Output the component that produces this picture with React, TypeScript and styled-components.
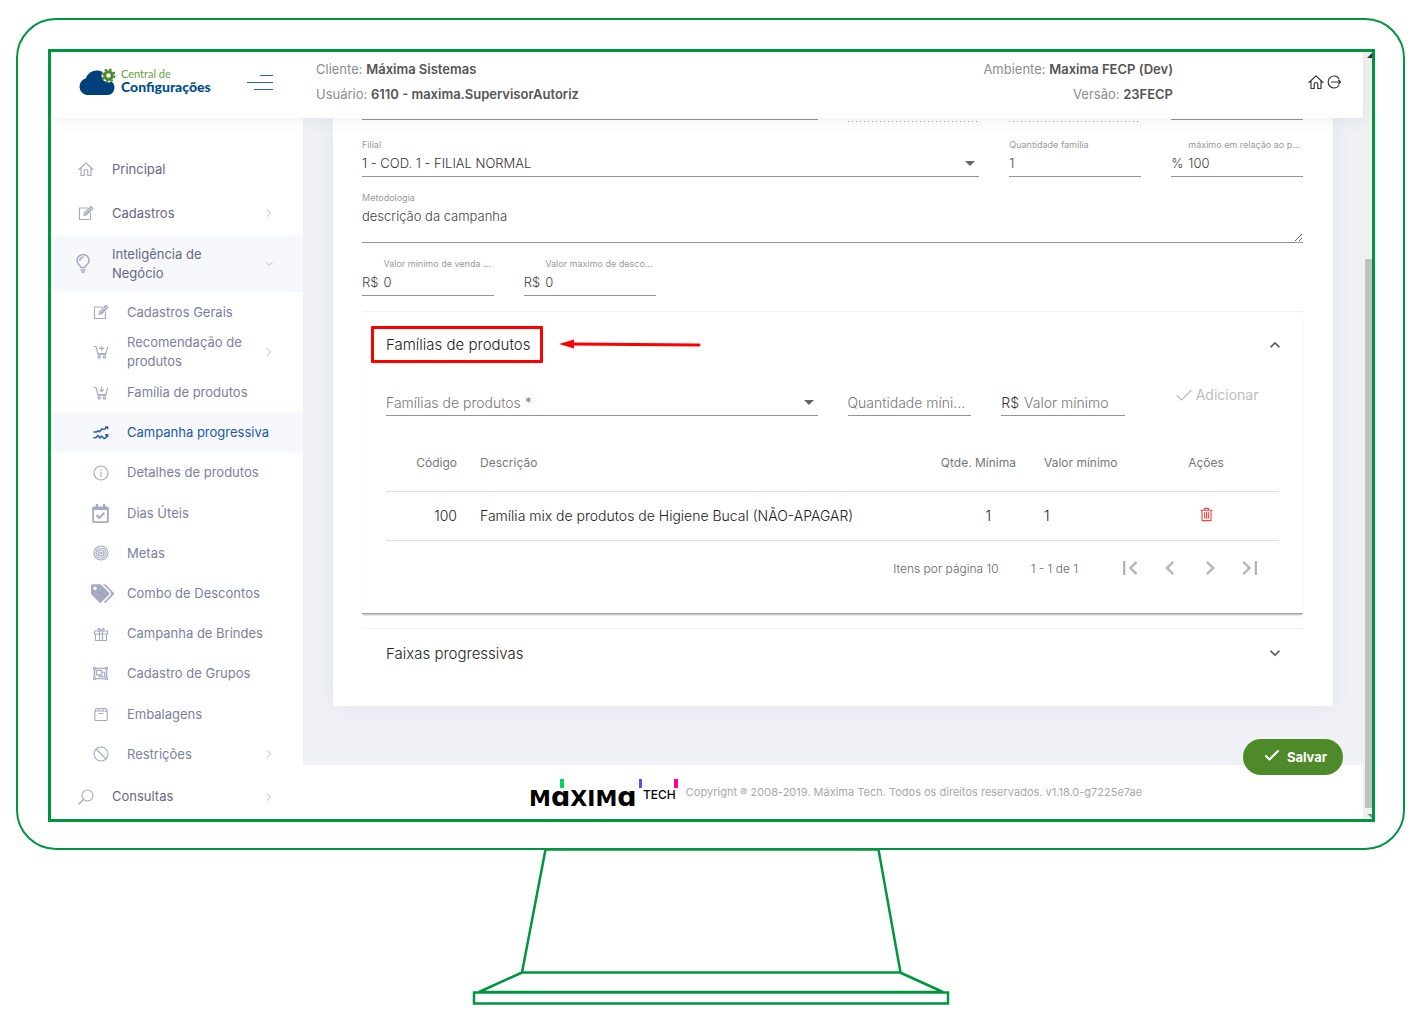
import React, { useState } from 'react';
import styled, { createGlobalStyle, css } from 'styled-components';
import { FaTags, FaRegCalendarCheck, FaRegObjectGroup } from 'react-icons/fa';
import { MdFirstPage, MdLastPage, MdChevronLeft, MdChevronRight, MdExpandLess, MdExpandMore } from 'react-icons/md';

const GREEN = '#009640';
const FONT = 'Inter, "Open Sans", "Liberation Sans", sans-serif';

const GlobalStyle = createGlobalStyle`
  *, *::before, *::after { box-sizing: border-box; }
  body { margin: 0; background: #fff; font-family: ${FONT}; font-size: 13px; font-weight: 300; color: #646c9a; }
  button, input, select, textarea { font: inherit; color: inherit; margin: 0; padding: 0; border: 0; background: none; border-radius: 0; outline: none; }
  button { cursor: pointer; }
`;

/* ---------- monitor ---------- */
const Page = styled.div`
  min-height: 100vh;
  padding: 18px 21px 0 16px;
  display: flex;
  flex-direction: column;
`;
const Monitor = styled.div`
  border: 2px solid ${GREEN};
  border-radius: 40px;
  padding: 29px 28px 26px 30px;
`;
const Screen = styled.div`
  border: 3px solid ${GREEN};
  display: flex;
  overflow: hidden;
`;
const Stand = styled.svg`
  display: block;
  align-self: center;
  margin-top: -2px;
`;
const Shell = styled.div`
  flex: 1;
  min-width: 0;
  display: flex;
  flex-direction: column;
`;
const Track = styled.div`
  width: 9px;
  padding-left: 2px;
  background: #f1f1f1;
  display: flex;
  flex-direction: column;
  svg { display: block; flex: none; }
`;
const Thumb = styled.div`
  flex: 1;
  margin-top: 198px;
  background: #c1c1c1;
`;

/* ---------- header ---------- */
const Header = styled.header`
  position: relative;
  z-index: 2;
  height: 66px;
  flex: none;
  display: flex;
  align-items: center;
  padding-bottom: 6px;
  background: #fff;
  box-shadow: 0 1px 15px 1px rgba(69, 65, 78, 0.08);
`;
const Brand = styled.div`
  width: 265px;
  padding: 0 43px 0 27px;
  display: flex;
  align-items: center;
  justify-content: space-between;
`;
const BrandLink = styled.a`
  display: flex;
  align-items: center;
  gap: 5px;
  text-decoration: none;
  font-family: Lato, sans-serif;
  line-height: 13px;
`;
const BrandText = styled.span`
  padding-bottom: 4px;
`;
const BrandTop = styled.span`
  display: block;
  font-size: 11px;
  font-weight: 400;
  color: #6a9e3f;
`;
const BrandName = styled.span`
  display: block;
  font-size: 14px;
  font-weight: 900;
  color: #024f8a;
`;
const MenuButton = styled.button`
  display: flex;
`;
const Info = styled.div<{ $right?: boolean }>`
  line-height: 25px;
  font-weight: 400;
  color: #8d8d8d;
  text-align: ${(p) => (p.$right ? 'right' : 'left')};
  margin-left: ${(p) => (p.$right ? 'auto' : '0')};
  strong { color: #555; font-weight: 600; }
`;
const HeaderIcons = styled.nav`
  display: flex;
  gap: 2px;
  margin: 0 21px 0 135px;
  color: #333;
  a { display: flex; color: inherit; }
`;

/* ---------- sidebar ---------- */
const Body = styled.div`
  display: flex;
  flex: 1;
`;
const Sidebar = styled.nav`
  width: 252px;
  flex: none;
  display: flex;
  flex-direction: column;
  padding: 29px 0 0;
  background: #fff;
`;
const SubMenu = styled.div`
  flex: 1;
  display: grid;
  grid-auto-rows: 1fr;
`;
const Item = styled.a<{ $sub?: boolean; $open?: boolean; $active?: boolean }>`
  display: flex;
  align-items: center;
  min-height: ${(p) => (p.$open ? 57 : p.$sub ? 40 : 44)}px;
  padding: 0 28px 0 ${(p) => (p.$sub ? 40 : 25)}px;
  line-height: 19px;
  font-weight: 400;
  text-decoration: none;
  color: ${(p) => (p.$active ? '#2159a8' : p.$sub ? '#7a7fa0' : '#646884')};
  background: ${(p) => (p.$active || p.$open ? '#f7f8fb' : 'transparent')};
`;
const ItemIcon = styled.span<{ $active?: boolean; $wide?: boolean }>`
  width: 24px;
  margin-right: 12px;
  padding-left: ${(p) => (p.$wide ? 0 : 2)}px;
  flex: none;
  display: flex;
  color: ${(p) => (p.$active ? '#2159a8' : '#a5aac2')};
`;
const ItemText = styled.span`
  white-space: nowrap;
  flex: 1;
`;
const ItemArrow = styled.span`
  width: 12px;
  display: flex;
  justify-content: center;
  color: #b4b8cc;
`;

/* ---------- main ---------- */
const Main = styled.main`
  position: relative;
  flex: 1;
  min-width: 0;
  display: flex;
  flex-direction: column;
  background: #f0f1f7;
`;
const Card = styled.section`
  margin: 0 30px 59px;
  padding: 0 30px 32px 29px;
  background: #fff;
  box-shadow: 0 0 20px rgba(69, 75, 110, 0.08);
`;
const Row = styled.div`
  display: grid;
  grid-template-columns: repeat(6, minmax(0, 1fr));
  column-gap: 30px;
  margin-bottom: 15px;
`;
const Rule = styled.div<{ $span?: number; $dotted?: boolean }>`
  grid-column: span ${(p) => p.$span || 1};
  height: 6px;
  padding-top: ${(p) => (p.$dotted ? 3 : 1)}px;
  &::before {
    content: '';
    display: block;
    height: 1px;
    background: ${(p) => (p.$dotted ? 'repeating-linear-gradient(90deg, #999 0 1px, transparent 1px 4px)' : '#949494')};
  }
`;
const FieldBox = styled.div<{ $span: number; $large?: boolean }>`
  grid-column: span ${(p) => p.$span};
  display: grid;
  grid-template-columns: auto minmax(0, 1fr);
  column-gap: 5px;
  align-items: center;
  border-bottom: 1px solid #949494;
  color: ${(p) => (p.$large ? '#333' : '#444')};
  font-size: ${(p) => (p.$large ? 14 : 13)}px;
  line-height: 25px;
`;
const Stack = styled.div`
  grid-column: 1 / -1;
  display: grid;
  grid-template-columns: 0 minmax(0, 1fr);
  align-items: center;
`;
const FieldLabel = styled.label`
  grid-column: 2;
  font-size: 9px;
  font-weight: 400;
  line-height: 12px;
  color: #999;
  white-space: nowrap;
`;
const Prefix = styled.span`
  grid-column: 1;
`;
const control = css`
  grid-column: 2;
  width: 100%;
  height: 25px;
  line-height: 25px;
  &::placeholder { color: #777; opacity: 1; }
`;
const Input = styled.input`${control}`;
const Select = styled.select<{ $row: number; $empty?: boolean }>`
  ${control}
  grid-row: ${(p) => p.$row};
  appearance: none;
  color: ${(p) => (p.$empty ? '#777' : '#333')};
`;
const SelectArrow = styled.svg<{ $row: number }>`
  grid-column: 2;
  grid-row: ${(p) => p.$row};
  justify-self: end;
  margin-right: 4px;
  pointer-events: none;
`;
const TextArea = styled.textarea`
  ${control}
  display: block;
  height: 38px;
  resize: vertical;
`;
const Panel = styled.section<{ $open?: boolean }>`
  border-top: 1px solid #f2f2f2;
  ${(p) => p.$open && css`
    margin-bottom: 14px;
    border-bottom: 1px solid #9da19f;
    box-shadow: 0 2px 2px -1px rgba(0, 0, 0, 0.3);
  `}
`;
const PanelHead = styled.button<{ $open?: boolean }>`
  width: 100%;
  display: flex;
  align-items: center;
  gap: 16px;
  padding: ${(p) => (p.$open ? '14px 18px 14px 9px' : '9px 18px 5px 24px')};
  text-align: left;
  font-size: 15px;
  line-height: 31px;
  color: #222;
  > svg:last-child { margin-left: auto; color: #555; }
`;
const Highlight = styled.span`
  border: 3px solid #f00;
  border-radius: 1px;
  padding: 0 10px 0 12px;
`;
const PanelBody = styled.div`
  padding: 13px 24px 17px;
`;
const AddRow = styled(Row)`
  margin-bottom: 19px;
`;
const AddButton = styled.button`
  display: flex;
  align-items: center;
  justify-content: center;
  gap: 4px;
  height: 8px;
  font-size: 14px;
  font-weight: 400;
  color: #bdbdbd;
`;
const Table = styled.table`
  width: 100%;
  border-collapse: collapse;
  table-layout: fixed;
  font-size: 14px;
  color: #222;
  th { height: 56px; font-size: 12px; font-weight: 400; color: #777; }
  td { height: 49px; }
  tr { border-bottom: 1px solid #dedede; }
`;
const Cell = styled.td<{ $align?: string; $l?: number; $r?: number }>`
  padding: 0 ${(p) => p.$r || 0}px 0 ${(p) => p.$l || 0}px;
  text-align: ${(p) => p.$align || 'left'};
  white-space: nowrap;
`;
const Trash = styled.button`
  color: #f0483e;
  vertical-align: middle;
`;
const Pager = styled.div`
  height: 55px;
  display: flex;
  align-items: center;
  justify-content: flex-end;
  padding-right: 9px;
  font-size: 12px;
  color: #666;
`;
const Range = styled.span`
  margin: 0 32px;
`;
const PageButton = styled.button`
  width: 40px;
  height: 40px;
  display: flex;
  align-items: center;
  justify-content: center;
  color: #b5b5b5;
`;
const Footer = styled.footer`
  height: 54px;
  padding-left: 6px;
  background: #fff;
  display: flex;
  align-items: center;
  justify-content: center;
  gap: 8px;
  font-size: 11px;
  font-weight: 400;
  color: #a8a8a8;
`;
const MaximaLogo = styled.svg`
  font-family: "DejaVu Sans", sans-serif;
  font-weight: 700;
  overflow: visible;
`;
const Save = styled.button`
  position: absolute;
  right: 20px;
  bottom: 44px;
  width: 100px;
  height: 36px;
  display: flex;
  align-items: center;
  justify-content: center;
  gap: 7px;
  padding-left: 5px;
  border-radius: 18px;
  background: #4f8a2a;
  color: #fff;
  font-weight: 700;
`;

/* ---------- icons ---------- */
const Line = ({ s = 16, w = 1.15, children }: { s?: number; w?: number; children: React.ReactNode }) => (
  <svg width={s} height={s} viewBox="0 0 16 16" fill="none" stroke="currentColor" strokeWidth={w} strokeLinejoin="round" strokeLinecap="round" aria-hidden="true">
    {children}
  </svg>
);
const Home = () => (
  <Line><path d="M1 8.5 8 1.8l7 6.7M3 7v7.500h3.200v-4.200a1.800 1.800 0 0 1 3.600 0v4.200H13V7" /></Line>
);
const Edit = () => (
  <Line><path d="M9 3H1.500v11.500h11V8M6 10.500l.6-2.800 6.200-6.200 2 2-6.200 6.200zM11.500 2.800l2 2M7.800 8.800l3.700-3.700" /></Line>
);
const Bulb = () => (
  <svg width="14" height="20" viewBox="0 0 14 20" fill="none" stroke="currentColor" strokeWidth="1.500" strokeLinejoin="round" strokeLinecap="round" aria-hidden="true">
    <path d="M5 13.500c0-2-4-3-4-7a6 6 0 0 1 12 0c0 4-4 5-4 7zM5 16h4M5.800 18h2.400M3.800 6.500A3.200 3.200 0 0 1 7 3.300" />
  </svg>
);
const Cart = ({ down }: { down?: boolean }) => (
  <Line>
    <path d="M1 2.500h2l2.200 8.200h7.300l2.200-7.700M4 6.500l1 3h7.500" />
    <circle cx="6.200" cy="13" r="1.100" /><circle cx="11.500" cy="13" r="1.100" />
    {down ? <path d="M8.700 2v4.500M6.900 4.900l1.800 1.800 1.800-1.800" /> : <path d="M8.700 2.200v4.400M6.500 4.400h4.400" />}
  </Line>
);
const Trend = () => (
  <Line w={1.4}><path d="M1 7h2.500l1.500-1.200 1.500 1 2.500-3 2 .7L14.500 2M12.700 2h1.900v1.800M1 12.800l2-.3 2-2 2 2.500 1.500-2 2.500 2.500 1.500-.5 2-3M12.700 9.800h2v1.800" /></Line>
);
const InfoIcon = () => (
  <Line><circle cx="8" cy="8" r="7" /><path d="M8 7v4.500M8 4.600v.3" /></Line>
);
const Target = () => (
  <Line><circle cx="8" cy="8" r="7" /><circle cx="8" cy="8" r="5" /><circle cx="8" cy="8" r="3" /><circle cx="8" cy="8" r="1" /></Line>
);
const Gift = () => (
  <Line><path d="M1.500 5h13v3h-13zM2.500 8v6.500h11V8M6.500 5v9.500M9.500 5v9.500M8 5C6 5 4.500 4 5 2.800S7.500 3 8 5c.5-2 2.500-3.400 3-2.200S10 5 8 5z" /></Line>
);
const Box = () => (
  <Line><path d="M1.800 5v8.500a1 1 0 0 0 1 1h10.400a1 1 0 0 0 1-1V5zM1.800 5l1.400-2.500h9.600L14.200 5M6 7.500h4M6 2.500V5M10 2.500V5" /></Line>
);
const Ban = () => (
  <Line><circle cx="8" cy="8" r="7" /><path d="M3 3l10 10" /></Line>
);
const Search = () => (
  <Line><circle cx="9.500" cy="6.500" r="5.500" /><path d="M5.500 10.500 1 15" /></Line>
);
const Logout = () => (
  <Line><path d="M13 4.500A6 6 0 1 0 13 11.500M5.500 8h9M12.500 6l2 2-2 2" /></Line>
);
const Chevron = ({ down }: { down?: boolean }) => (
  <Line s={10} w={1.6}>{down ? <path d="M3 5.500l5 5 5-5" /> : <path d="M5 2.500l5.500 5.500L5 13.500" />}</Line>
);
const Arrow = ({ row }: { row: number }) => (
  <SelectArrow $row={row} width="10" height="5" viewBox="0 0 10 5" aria-hidden="true"><path d="M0 0h10L5 5z" fill="#666" /></SelectArrow>
);

type Entry = { text: React.ReactNode; icon: React.ReactNode; arrow?: boolean; active?: boolean; wide?: boolean };
const subItems: Entry[] = [
  { text: 'Cadastros Gerais', icon: <Edit /> },
  { text: <>Recomendação de<br />produtos</>, icon: <Cart />, arrow: true },
  { text: 'Família de produtos', icon: <Cart down /> },
  { text: 'Campanha progressiva', icon: <Trend />, active: true },
  { text: 'Detalhes de produtos', icon: <InfoIcon /> },
  { text: 'Dias Úteis', icon: <FaRegCalendarCheck size={19} />, wide: true },
  { text: 'Metas', icon: <Target /> },
  { text: 'Combo de Descontos', icon: <FaTags size={23} />, wide: true },
  { text: 'Campanha de Brindes', icon: <Gift /> },
  { text: 'Cadastro de Grupos', icon: <FaRegObjectGroup size={15} /> },
  { text: 'Embalagens', icon: <Box /> },
  { text: 'Restrições', icon: <Ban />, arrow: true },
];

type FieldProps = { id: string; label: string; prefix?: string; value: string };
const Field = ({ id, label, prefix, value }: FieldProps) => (
  <FieldBox $span={1}>
    {prefix ? (
      <>
        <FieldLabel htmlFor={id}>{label}</FieldLabel>
        <Prefix>{prefix}</Prefix>
        <Input id={id} defaultValue={value} />
      </>
    ) : (
      <Stack>
        <FieldLabel htmlFor={id}>{label}</FieldLabel>
        <Input id={id} defaultValue={value} />
      </Stack>
    )}
  </FieldBox>
);

export default function App() {
  const [family, setFamily] = useState('');
  return (
    <Page>
      <GlobalStyle />
      <Monitor>
        <Screen>
          <Shell>
            <Header>
              <Brand>
                <BrandLink href="#">
                  <svg width="38" height="28" viewBox="0 0 38 28" aria-hidden="true">
                    <path d="M9 27a8.500 8.500 0 0 1-1-16.700C9.500 5.500 14 2.500 19 2.500c4.500 0 8.500 2.500 10 6.500v3.500c5 0 7.500 3 7.500 7s-3 7.500-7 7.500z" fill="#00417c" />
                    <circle cx="30.500" cy="7.500" r="7" fill="#fff" />
                    <circle cx="30.500" cy="7.500" r="3.800" fill="none" stroke="#4f8a2a" strokeWidth="3" />
                    <circle cx="30.500" cy="7.500" r="6" fill="none" stroke="#4f8a2a" strokeWidth="2" strokeDasharray="2.500 2.210" />
                  </svg>
                  <BrandText>
                    <BrandTop>Central de</BrandTop>
                    <BrandName>Configurações</BrandName>
                  </BrandText>
                </BrandLink>
                <MenuButton aria-label="Menu">
                  <svg width="26" height="17" viewBox="0 0 26 17" stroke="#2b6394" aria-hidden="true"><path d="M13 1.500h13M0 8.500h26M7 15.500h19" /></svg>
                </MenuButton>
              </Brand>
              <Info>
                Cliente: <strong>Máxima Sistemas</strong><br />
                Usuário: <strong>6110 - maxima.SupervisorAutoriz</strong>
              </Info>
              <Info $right>
                Ambiente: <strong>Maxima FECP (Dev)</strong><br />
                Versão: <strong>23FECP</strong>
              </Info>
              <HeaderIcons>
                <a href="#" aria-label="Início"><Home /></a>
                <a href="#" aria-label="Sair"><Logout /></a>
              </HeaderIcons>
            </Header>
            <Body>
              <Sidebar>
                <Item href="#"><ItemIcon><Home /></ItemIcon><ItemText>Principal</ItemText></Item>
                <Item href="#"><ItemIcon><Edit /></ItemIcon><ItemText>Cadastros</ItemText><ItemArrow><Chevron /></ItemArrow></Item>
                <Item href="#" $open><ItemIcon $wide><Bulb /></ItemIcon><ItemText>Inteligência de<br />Negócio</ItemText><ItemArrow><Chevron down /></ItemArrow></Item>
                <SubMenu>
                  {subItems.map((it, i) => (
                    <Item key={i} href="#" $sub $active={it.active}>
                      <ItemIcon $active={it.active} $wide={it.wide}>{it.icon}</ItemIcon>
                      <ItemText>{it.text}</ItemText>
                      {it.arrow && <ItemArrow><Chevron /></ItemArrow>}
                    </Item>
                  ))}
                </SubMenu>
                <Item href="#"><ItemIcon><Search /></ItemIcon><ItemText>Consultas</ItemText><ItemArrow><Chevron /></ItemArrow></Item>
              </Sidebar>
              <Main>
                <Card>
                  <Row><Rule $span={3} /><Rule $dotted /><Rule $dotted /><Rule /></Row>
                  <Row>
                    <FieldBox $span={4}>
                      <Stack>
                        <FieldLabel htmlFor="filial">Filial</FieldLabel>
                        <Select id="filial" $row={2}><option>1 - COD. 1 - FILIAL NORMAL</option></Select>
                        <Arrow row={2} />
                      </Stack>
                    </FieldBox>
                    <Field id="qtd" label="Quantidade família" value="1" />
                    <Field id="max" label="máximo em relação ao p..." prefix="%" value="100" />
                  </Row>
                  <Row>
                    <FieldBox $span={6}>
                      <Stack>
                        <FieldLabel htmlFor="met">Metodologia</FieldLabel>
                        <TextArea id="met" defaultValue="descrição da campanha" />
                      </Stack>
                    </FieldBox>
                  </Row>
                  <Row>
                    <Field id="vmin" label="Valor minímo de venda ..." prefix="R$" value="0" />
                    <Field id="vmax" label="Valor maximo de desco..." prefix="R$" value="0" />
                  </Row>
                  <Panel $open>
                    <PanelHead $open aria-expanded="true">
                      <Highlight>Famílias de produtos</Highlight>
                      <svg width="142" height="12" viewBox="0 0 142 12" aria-hidden="true">
                        <path d="M0 5 15 .5V9.500z" fill="#f00" />
                        <path d="M12 5l128 1" stroke="#f00" strokeWidth="3" strokeLinecap="round" />
                      </svg>
                      <MdExpandLess size={20} />
                    </PanelHead>
                    <PanelBody>
                      <AddRow>
                        <FieldBox $span={3} $large>
                          <Stack>
                            <Select $row={1} aria-label="Famílias de produtos" $empty value={family} onChange={(e) => setFamily(e.target.value)}>
                              <option value="">Famílias de produtos *</option>
                            </Select>
                            <Arrow row={1} />
                          </Stack>
                        </FieldBox>
                        <FieldBox $span={1} $large>
                          <Stack><Input aria-label="Quantidade mínima" placeholder="Quantidade míni..." /></Stack>
                        </FieldBox>
                        <FieldBox $span={1} $large>
                          <Prefix>R$</Prefix>
                          <Input aria-label="Valor mínimo" placeholder="Valor mínimo" />
                        </FieldBox>
                        <AddButton disabled>
                          <Line s={16}><path d="M1 9.500 5.500 14 15 4.500" /></Line>
                          Adicionar
                        </AddButton>
                      </AddRow>
                      <Table>
                        <colgroup><col width="82" /><col /><col width="100" /><col width="103" /><col width="146" /></colgroup>
                        <thead>
                          <tr>
                            <Cell as="th" $align="right" $r={11}>Código</Cell>
                            <Cell as="th" $l={12}>Descrição</Cell>
                            <Cell as="th" $align="right" $r={14}>Qtde. Mínima</Cell>
                            <Cell as="th" $l={14}>Valor mínimo</Cell>
                            <Cell as="th" $align="center">Ações</Cell>
                          </tr>
                        </thead>
                        <tbody>
                          <tr>
                            <Cell $align="right" $r={11}>100</Cell>
                            <Cell $l={12}>Família mix de produtos de Higiene Bucal (NÃO-APAGAR)</Cell>
                            <Cell $align="right" $r={39}>1</Cell>
                            <Cell $l={14}>1</Cell>
                            <Cell $align="center">
                              <Trash aria-label="Excluir">
                                <Line s={15} w={1.2}><path d="M2 3.500h12M3.200 3.500v11h9.600v-11M6 3V1.500h4V3M6 6v6M8 6v6M10 6v6" /></Line>
                              </Trash>
                            </Cell>
                          </tr>
                        </tbody>
                      </Table>
                      <Pager>
                        <span>Itens por página 10</span>
                        <Range>1 - 1 de 1</Range>
                        <PageButton aria-label="Primeira"><MdFirstPage size={28} /></PageButton>
                        <PageButton aria-label="Anterior"><MdChevronLeft size={28} /></PageButton>
                        <PageButton aria-label="Próxima"><MdChevronRight size={28} /></PageButton>
                        <PageButton aria-label="Última"><MdLastPage size={28} /></PageButton>
                      </Pager>
                    </PanelBody>
                  </Panel>
                  <Panel>
                    <PanelHead aria-expanded="false">Faixas progressivas<MdExpandMore size={20} /></PanelHead>
                  </Panel>
                </Card>
                <Footer>
                  <MaximaLogo width="148" height="30" viewBox="0 0 148 30" role="img" aria-label="Máxima Tech">
                    <text x="-1" y="29" fontSize="22">M<tspan fontSize="27">ɑ</tspan>XIM<tspan fontSize="27">ɑ</tspan></text>
                    <text x="113" y="22" fontSize="12" fontWeight="500" fontFamily="Inter">TECH</text>
                    <path d="M30 2h4v9h-4z" fill="#00d46a" />
                    <path d="M109 2h3v9h-3z" fill="#4b55f5" />
                    <path d="M144 2h4v9h-4z" fill="#ff0090" />
                  </MaximaLogo>
                  <span>Copyright ® 2008-2019. Máxima Tech. Todos os direitos reservados. v1.18.0-g7225e7ae</span>
                </Footer>
                <Save>
                  <Line s={16} w={2}><path d="M2 7l3.500 3.500L14 2" /></Line>
                  Salvar
                </Save>
              </Main>
            </Body>
          </Shell>
          <Track>
            <svg width="7" height="9" viewBox="0 0 7 9" aria-hidden="true"><path d="M2 6l5-5v5z" fill="#333" /></svg>
            <Thumb />
            <svg width="7" height="11" viewBox="0 0 7 11" aria-hidden="true"><path d="M2 6h5v4z" fill="#888" /></svg>
          </Track>
        </Screen>
      </Monitor>
      <Stand width="478" height="157" viewBox="0 0 478 157" fill="none" stroke={GREEN} strokeWidth="2.500" aria-hidden="true">
        <path d="M73.500 1.500h333l22 123H50zM50 124.500 7 144h464l-43-19.500M2 144.500h474v11H2z" />
      </Stand>
    </Page>
  );
}
